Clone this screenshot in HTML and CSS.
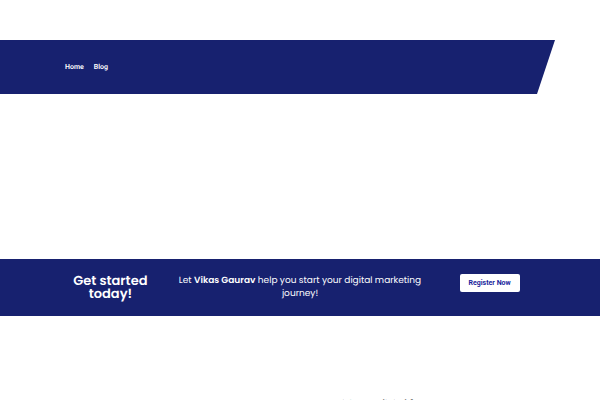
FILE: index.html
```
<!DOCTYPE html>
<html lang="en">
<head>
  <meta charset="UTF-8">
  <meta name="viewport" content="width=device-width, initial-scale=1.0">
  <title>Vikas Gaurav - Digital Marketing</title>
  <link rel="stylesheet" href="styles.css">
</head>
<body>
  <header class="site-header">
    <nav class="main-nav">
      <a href="#">Home</a>
      <a href="#">Blog</a>
    </nav>
  </header>

  <main>
    <section class="cta">
      <h2 class="cta-title">Get started today!</h2>
      <p class="cta-text">Let <strong>Vikas Gaurav</strong> help you start your digital marketing journey!</p>
      <div class="cta-action">
        <button class="btn" type="button">Register Now</button>
      </div>
    </section>

    <section class="about">
      <h3 class="about-title">Hi, I am a digital fan</h3>
    </section>
  </main>
</body>
</html>
```

FILE: styles.css
```
body {
  margin: 0;
  height: 100vh;
  overflow: hidden;
  font-family: Roboto, sans-serif;
  text-rendering: geometricPrecision;
  background: #fff;
}
.site-header {
  margin-top: 40px;
  padding: 20px 65px;
  background: #17216f;
  clip-path: polygon(0 0, 92.5% 0, 89.5% 100%, 0 100%);
}
.main-nav {
  display: flex;
  gap: 10px;
  line-height: 14px;
}
.main-nav a {
  color: #fff;
  font-size: 7px;
  font-weight: 600;
  text-decoration: none;
}
.cta {
  display: grid;
  grid-template-columns: 21% 1fr 21%;
  align-items: start;
  margin-top: 165px;
  padding: 15px 60px;
  background: #17216f;
  color: #fff;
  font-family: Poppins, sans-serif;
  text-align: center;
}
.cta-title {
  margin: 0;
  padding: 0 10px;
  font-size: 13px;
  font-weight: 600;
  line-height: 13px;
}
.cta-text {
  margin: 0;
  padding: 1px 15px 0;
  font-size: 9px;
  line-height: 13px;
}
.cta-text strong {
  font-weight: 600;
}
.cta-action {
  display: flex;
  justify-content: center;
}
.btn {
  padding: 0 9px;
  border: none;
  border-radius: 2px;
  background: #fff;
  color: #1a1f9c;
  font-family: Roboto, sans-serif;
  font-size: 7px;
  font-weight: 700;
  line-height: 18px;
  cursor: pointer;
}
.about {
  padding: 82px 50px 0;
}
.about-title {
  margin: 0 0 0 57%;
  font-size: 10px;
  font-weight: 500;
  line-height: 14px;
}
```
